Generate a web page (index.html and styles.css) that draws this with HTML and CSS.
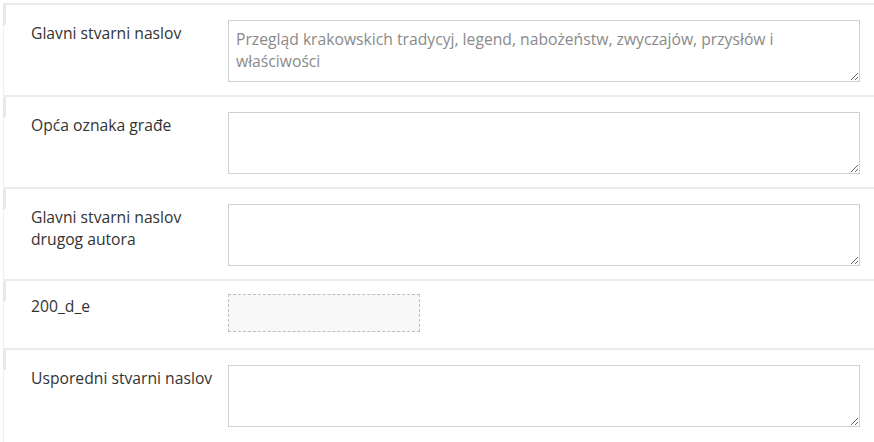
FILE: index.html
```html
<!DOCTYPE html>
<html lang="hr">
<head>
<meta charset="utf-8">
<title>Form</title>
<link rel="stylesheet" href="styles.css">
</head>
<body>
<div class="form">
  <div class="row">
    <label class="label">Glavni stvarni naslov</label>
    <div class="field"><textarea class="input" placeholder="Przegląd krakowskich tradycyj, legend, nabożeństw, zwyczajów, przysłów i właściwości"></textarea></div>
  </div>
  <div class="row">
    <label class="label">Opća oznaka građe</label>
    <div class="field"><textarea class="input"></textarea></div>
  </div>
  <div class="row">
    <label class="label">Glavni stvarni naslov drugog autora</label>
    <div class="field"><textarea class="input"></textarea></div>
  </div>
  <div class="row row-short">
    <label class="label">200_d_e</label>
    <div class="field"><div class="dropzone"></div></div>
  </div>
  <div class="row">
    <label class="label">Usporedni stvarni naslov</label>
    <div class="field"><textarea class="input"></textarea></div>
  </div>
</div>
</body>
</html>
```
FILE: styles.css
```css
html, body {
  margin: 0;
  padding: 0;
  background: #ffffff;
}
body {
  font-family: "Open Sans", "DejaVu Sans", sans-serif;
  font-size: 15.7px;
  line-height: 22px;
  color: #333333;
}
.form {
  margin: 3px 0 0 3px;
  border-left: 1px solid #efefef;
  min-height: 439px;
}
.row {
  position: relative;
  display: grid;
  grid-template-columns: 197px 1fr;
  border-top: 2px solid #ebebeb;
  padding: 15px 14px 13px 27px;
}
.row::before {
  content: "";
  position: absolute;
  left: -1px;
  top: 0;
  width: 3px;
  height: 20px;
  background: #e8e8e8;
}
.row-short {
  padding-top: 13px;
  padding-bottom: 16px;
}
.label {
  display: block;
  padding-top: 2px;
  padding-right: 10px;
}
.row-short .label {
  padding-top: 1px;
}
.field {
  min-width: 0;
}
.input {
  display: block;
  box-sizing: border-box;
  width: 100%;
  height: 62px;
  margin: 0;
  padding: 7px 7px 5px;
  border: 1px solid #d0d0d0;
  border-radius: 0;
  font-family: "Open Sans", "DejaVu Sans", sans-serif;
  font-size: 15.7px;
  line-height: 22px;
  color: #333333;
  background: #ffffff;
  resize: vertical;
  outline: none;
}
.input::placeholder {
  color: #8a8a8a;
  opacity: 1;
}
.dropzone {
  box-sizing: border-box;
  width: 192px;
  height: 38px;
  border: 1px dashed #bdbdbd;
  background: #f8f8f8;
}
```
